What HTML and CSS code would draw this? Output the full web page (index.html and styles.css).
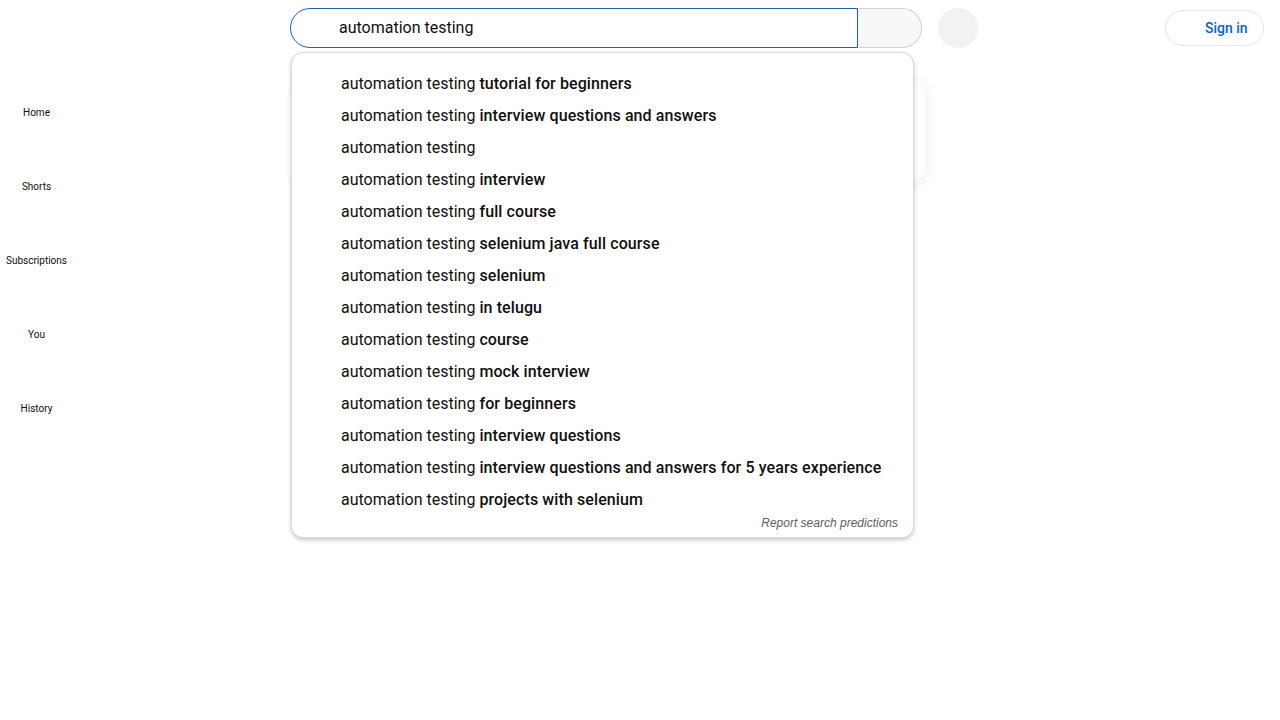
FILE: index.html
```html
<!DOCTYPE html>
<html lang="en">
<head>
<meta charset="utf-8">
<title>automation testing - YouTube</title>
<link rel="stylesheet" href="styles.css">
</head>
<body>
<header class="masthead">
  <div class="start"></div>
  <div class="center">
    <div class="searchbox">
      <div class="input-wrap">
        <span class="query">automation testing</span>
      </div>
      <div class="search-btn"></div>
      <div class="suggest">
        <ul class="suggest-list">
          <li>automation testing <b>tutorial for beginners</b></li>
          <li>automation testing <b>interview questions and answers</b></li>
          <li>automation testing</li>
          <li>automation testing <b>interview</b></li>
          <li>automation testing <b>full course</b></li>
          <li>automation testing <b>selenium java full course</b></li>
          <li>automation testing <b>selenium</b></li>
          <li>automation testing <b>in telugu</b></li>
          <li>automation testing <b>course</b></li>
          <li>automation testing <b>mock interview</b></li>
          <li>automation testing <b>for beginners</b></li>
          <li>automation testing <b>interview questions</b></li>
          <li>automation testing <b>interview questions and answers for 5 years experience</b></li>
          <li>automation testing <b>projects with selenium</b></li>
        </ul>
        <div class="report">Report search predictions</div>
      </div>
    </div>
    <div class="mic"></div>
  </div>
  <div class="end">
    <div class="signin"><span class="signin-icon"></span>Sign in</div>
  </div>
</header>
<div class="page">
  <nav class="guide">
    <div class="guide-item"><span class="guide-icon"></span><span class="guide-label">Home</span></div>
    <div class="guide-item"><span class="guide-icon"></span><span class="guide-label">Shorts</span></div>
    <div class="guide-item"><span class="guide-icon"></span><span class="guide-label">Subscriptions</span></div>
    <div class="guide-item"><span class="guide-icon"></span><span class="guide-label">You</span></div>
    <div class="guide-item"><span class="guide-icon"></span><span class="guide-label">History</span></div>
  </nav>
  <main class="content">
    <div class="promo-card"></div>
  </main>
</div>
</body>
</html>
```

FILE: styles.css
```css
* { box-sizing: border-box; }
html, body { margin: 0; padding: 0; background: #fff; }
body {
  font-family: Roboto, "Liberation Sans", Arial, sans-serif;
  color: #0f0f0f;
  width: 1280px;
  height: 720px;
  overflow: hidden;
}
.masthead {
  height: 56px;
  display: flex;
  align-items: center;
  padding: 0 16px 0 0;
}
.start { width: 290px; flex: none; }
.center { display: flex; align-items: center; flex: none; }
.searchbox { position: relative; display: flex; }
.input-wrap {
  width: 568px;
  height: 40px;
  border: 1px solid #1c62b9;
  border-radius: 40px 0 0 40px;
  padding: 0 0 2px 48px;
  display: flex;
  align-items: center;
  position: relative;
  z-index: 1;
}
.query { font-size: 16px; color: #0f0f0f; }
.search-btn {
  width: 65px;
  height: 40px;
  margin-left: -1px;
  border: 1px solid #d3d3d3;
  border-left: none;
  background: #f8f8f8;
  border-radius: 0 40px 40px 0;
}
.mic {
  width: 40px;
  height: 40px;
  border-radius: 50%;
  background: #f2f2f2;
  margin-left: 16px;
}
.end { margin-left: auto; display: flex; align-items: center; }
.signin {
  height: 36px;
  width: 99px;
  border: 1px solid #e5e5e5;
  border-radius: 18px;
  display: flex;
  align-items: center;
  padding: 0 15px;
  font-size: 14px;
  font-weight: 500;
  color: #065fd4;
}
.signin-icon { width: 24px; height: 24px; flex: none; }

.suggest {
  position: absolute;
  left: 1px;
  top: 44px;
  width: 623px;
  background: #fff;
  border: 1px solid #d9d9d9;
  border-radius: 12px;
  box-shadow: 0 2px 4px rgba(0,0,0,0.22);
  padding: 15px 0 7px;
  z-index: 10;
}
.suggest-list { list-style: none; margin: 0; padding: 0; }
.suggest-list li {
  height: 32px;
  line-height: 32px;
  padding-left: 49px;
  font-size: 16px;
  color: #0f0f0f;
  white-space: nowrap;
}
.suggest-list b { font-weight: 500; letter-spacing: 0.1px; }
.report {
  text-align: right;
  padding-right: 15px;
  font-family: "Liberation Sans", Arial, sans-serif;
  font-style: italic;
  font-size: 12px;
  line-height: 14px;
  color: #606060;
}

.page { display: flex; }
.guide { width: 73px; flex: none; padding-top: 4px; }
.guide-item {
  display: flex;
  flex-direction: column;
  align-items: center;
  padding: 16px 0 14px;
}
.guide-icon { width: 24px; height: 24px; }
.guide-label {
  margin-top: 6px;
  font-size: 10px;
  line-height: 14px;
  color: #0f0f0f;
  white-space: nowrap;
}
.content { flex: 1; padding-top: 25px; padding-left: 226px; }
.promo-card {
  width: 626px;
  height: 99px;
  border-radius: 12px;
  background: #fff;
  box-shadow: 0 4px 16px rgba(0,0,0,0.08);
}
```
